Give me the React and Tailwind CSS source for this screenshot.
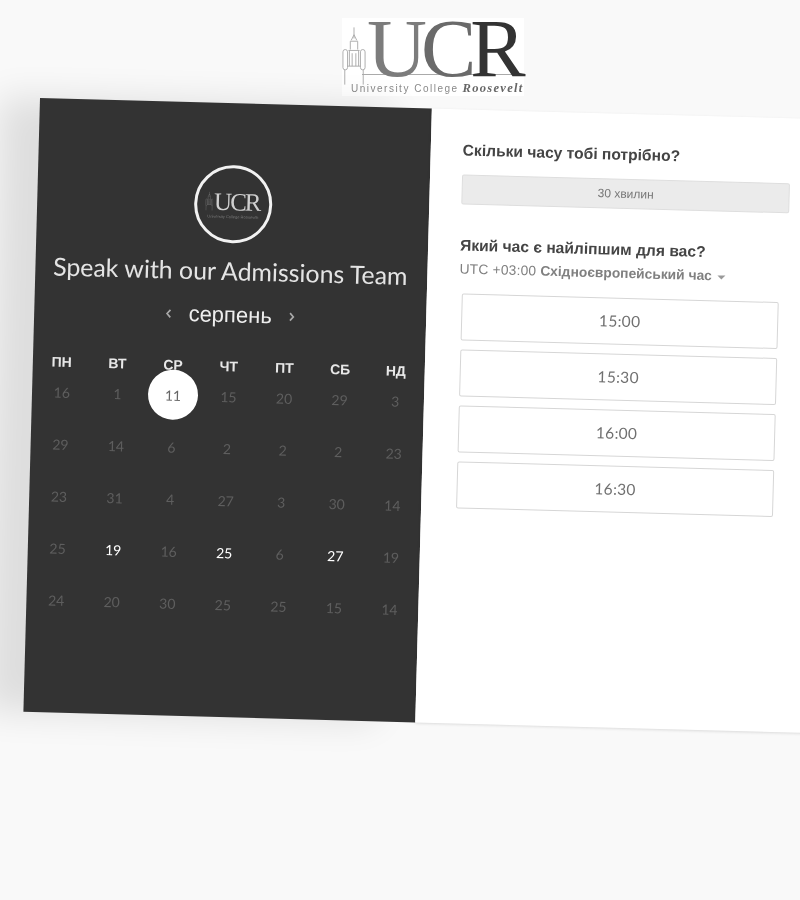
import React from "react";

const DAYS = ["ПН", "ВТ", "СР", "ЧТ", "ПТ", "СБ", "НД"];
const ROWS = [
  [16, 1, 11, 15, 20, 29, 3],
  [29, 14, 6, 2, 2, 2, 23],
  [23, 31, 4, 27, 3, 30, 14],
  [25, 19, 16, 25, 6, 27, 19],
  [24, 20, 30, 25, 25, 15, 14],
];
const TIMES = ["15:00", "15:30", "16:00", "16:30"];

function Tower({ className, stroke }) {
  return (
    <svg viewBox="0 0 26 62" className={className} fill="none" stroke={stroke} strokeWidth="1">
      <path d="M13 0V12M10 14L13 8L16 14M9 24V15H17V24M7 25H19M8 25V42M18 25V42M11 28V42M15 28V42" />
      <rect x="1" y="24" width="5" height="22" rx="2.5" />
      <rect x="20" y="24" width="5" height="22" rx="2.5" />
      <path d="M3 46V62M23 46V62M6 42H20" />
    </svg>
  );
}

function Logo() {
  return (
    <div className="relative ml-[342px] mt-[18px] h-[78px] w-[182px] shrink-0 bg-white">
      <Tower className="absolute left-[0px] top-[4px] h-[68px] w-[24px]" stroke="#a8a8a8" />
      <div className="flex h-[56px] pl-[25px] font-['Liberation_Serif',serif] text-[83px] leading-[60px] tracking-[-6px]">
        <span className="text-[#7c7c7c]">U</span>
        <span className="text-[#6a6a6a]">C</span>
        <span className="text-[#333333]">R</span>
      </div>
      <div className="ml-[20px] h-px w-[158px] bg-[#aaaaaa]" />
      <div className="flex items-baseline pl-[9px] pt-[6px] whitespace-nowrap">
        <span className="font-['Liberation_Sans',sans-serif] text-[10px] leading-[14px] tracking-[1.5px] text-[#8a8a8a]">
          University College
        </span>
        <span className="ml-[4px] font-['Liberation_Serif',serif] text-[12.5px] font-bold italic leading-[14px] tracking-[1.3px] text-[#666666]">
          Roosevelt
        </span>
      </div>
    </div>
  );
}

function SmallLogo() {
  return (
    <div className="mx-auto flex h-[78px] w-[78px] flex-col items-center justify-center rounded-full border-[3px] border-[#f2f2f2]">
      <div className="flex items-center pr-[2px]">
        <Tower className="mr-[1px] h-[19px] w-[8px]" stroke="#8a8a8a" />
        <span className="font-['Liberation_Serif',serif] text-[25px] leading-[24px] tracking-[-2px] text-[#cfcfcf]">UCR</span>
      </div>
      <span className="whitespace-nowrap font-['Liberation_Sans',sans-serif] text-[4px] leading-[5px] text-[#777777]">
        University College Roosevelt
      </span>
    </div>
  );
}

function Chevron({ flip }) {
  return (
    <svg viewBox="0 0 8 12" className="h-[10px] w-[7px]" fill="none" stroke="#a8a8a8" strokeWidth="2">
      <path d={flip ? "M2 1.5L6 6L2 10.5" : "M6 1.5L2 6L6 10.5"} />
    </svg>
  );
}

function Calendar() {
  return (
    <div className="h-[614px] w-[392px] shrink-0 bg-[#333333] pt-[62px] shadow-[-40px_0_36px_0_rgba(0,0,0,0.11)]">
      <SmallLogo />
      <h1 className="mt-[9px] -translate-x-[1px] whitespace-nowrap text-center font-['Lato',sans-serif] text-[24.9px] font-normal leading-[36px] text-[#e4e4e4]">
        Speak with our Admissions Team
      </h1>
      <div className="mt-[15px] flex h-[24px] items-center justify-center font-['Liberation_Sans',sans-serif]">
        <Chevron />
        <span className="mx-[16px] text-[22px] leading-[24px] text-[#eeeeee]">серпень</span>
        <Chevron flip />
      </div>
      <div className="ml-px mt-[29px] grid w-[390px] grid-cols-7 font-['Liberation_Sans',sans-serif] text-[14px] font-bold leading-[20px] text-[#e8e8e8]">
        {DAYS.map((d) => (
          <div key={d} className="text-center">{d}</div>
        ))}
      </div>
      <div className="-mt-[6px] ml-[2px] grid w-[389px] grid-cols-7 font-['Lato',sans-serif] text-[14px]">
        {ROWS.flat().map((n, i) => {
          const selected = i === 2;
          const white = i === 22 || i === 24 || i === 26;
          return (
            <div key={i} className="flex h-[52px] items-center justify-center">
              {selected ? (
                <span className="flex h-[50px] w-[50px] items-center justify-center rounded-full bg-white text-[#666666]">{n}</span>
              ) : (
                <span className={white ? "text-white" : "text-[#5e5e5e]"}>{n}</span>
              )}
            </div>
          );
        })}
      </div>
    </div>
  );
}

function Panel() {
  return (
    <div className="h-[614px] w-[420px] shrink-0 bg-white pl-[32px] pt-[30px] font-['Liberation_Sans',sans-serif] shadow-[0_1px_3px_rgba(0,0,0,0.12)]">
      <h2 className="text-[15.6px] font-bold leading-[22px] text-[#444444]">Скільки часу тобі потрібно?</h2>
      <div className="mt-[13px] flex h-[30px] w-[328px] items-center justify-center rounded-[2px] border border-[#dedede] bg-[#ebebeb] text-[12px] text-[#777777]">
        30 хвилин
      </div>
      <h2 className="mt-[30px] text-[15.6px] font-bold leading-[22px] text-[#444444]">Який час є найліпшим для вас?</h2>
      <div className="mt-[2px] flex items-center text-[13.8px] leading-[22px] text-[#808080]">
        <span className="tracking-[0.2px]">UTC +03:00</span>
        <span className="ml-[4px] font-bold">Східноєвропейський час</span>
        <span className="ml-[6px] mt-[2px] h-0 w-0 border-x-[4px] border-t-[4px] border-x-transparent border-t-[#999999]" />
      </div>
      <div className="ml-[3px] mt-[13px] flex flex-col gap-[9px]">
        {TIMES.map((t) => (
          <div key={t} className="flex h-[47px] w-[317px] items-center justify-center rounded-[2px] border border-[#d6d6d6] bg-white font-['Lato',sans-serif] text-[15.5px] tracking-[0.3px] text-[#707070]">
            {t}
          </div>
        ))}
      </div>
    </div>
  );
}

export default function App() {
  return (
    <div className="flex h-[900px] w-[800px] flex-col overflow-hidden bg-[#f9f9f9] grayscale">
      <Logo />
      <div className="ml-[40px] mt-[2px] flex w-max origin-top-left rotate-[1.55deg]">
        <Calendar />
        <Panel />
      </div>
    </div>
  );
}
